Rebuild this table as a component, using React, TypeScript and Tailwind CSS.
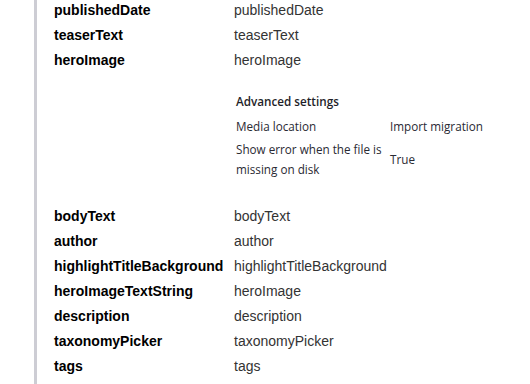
import React from "react";

type Row = { label: string; value: string };

const topRows: Row[] = [
  { label: "publishedDate", value: "publishedDate" },
  { label: "teaserText", value: "teaserText" },
];

const bottomRows: Row[] = [
  { label: "bodyText", value: "bodyText" },
  { label: "author", value: "author" },
  { label: "highlightTitleBackground", value: "highlightTitleBackground" },
  { label: "heroImageTextString", value: "heroImage" },
  { label: "description", value: "description" },
  { label: "taxonomyPicker", value: "taxonomyPicker" },
  { label: "tags", value: "tags" },
];

function PropRow({ label, value }: Row) {
  return (
    <div className="grid grid-cols-[180px_1fr] h-[25px] items-center">
      <div className="font-bold text-black">{label}</div>
      <div className="text-[#333]">{value}</div>
    </div>
  );
}

function AdvancedSettings() {
  return (
    <div
      className="pl-[2px] pt-[18px] pb-[25px] text-[11.7px] text-[#2a2a33]"
      style={{ fontFamily: '"Open Sans", "Noto Sans", sans-serif' }}
    >
      <div className="h-[20px] leading-[20px] font-semibold text-[#1e1e28]">Advanced settings</div>
      <div className="mt-[5px] grid grid-cols-[154px_1fr] gap-y-[3px] items-center">
        <div className="leading-[20px]">Media location</div>
        <div className="leading-[20px]">Import migration</div>
        <div className="leading-[20px] w-[150px]">Show error when the file is missing on disk</div>
        <div className="leading-[20px]">True</div>
      </div>
    </div>
  );
}

export default function App() {
  return (
    <div
      className="w-[530px] h-[384px] overflow-hidden bg-white flex text-[14px]"
      style={{ fontFamily: '"Liberation Sans", Arial, sans-serif' }}
    >
      <div className="w-[34px] shrink-0" />
      <div className="w-[3px] shrink-0 bg-[#cdcdd4]" />
      <div className="pl-[17px] mt-[-2px] flex-1">
        {topRows.map((r) => (
          <PropRow key={r.label} {...r} />
        ))}
        <div className="grid grid-cols-[180px_1fr]">
          <div className="font-bold text-black h-[25px] leading-[25px]">heroImage</div>
          <div>
            <div className="text-[#333] h-[25px] leading-[25px]">heroImage</div>
            <AdvancedSettings />
          </div>
        </div>
        {bottomRows.map((r) => (
          <PropRow key={r.label} {...r} />
        ))}
      </div>
    </div>
  );
}
